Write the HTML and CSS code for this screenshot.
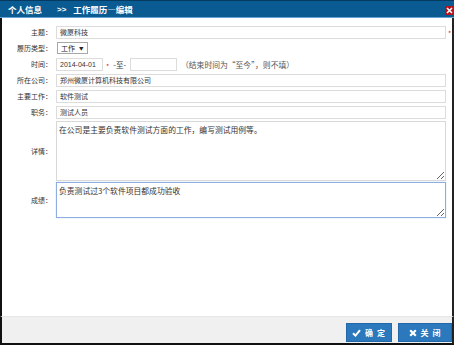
FILE: index.html
```html
<!DOCTYPE html>
<html lang="zh">
<head>
<meta charset="utf-8">
<link rel="stylesheet" href="styles.css">
</head>
<body>
<div class="window">
  <div class="header">
    <span class="crumb">个人信息</span>
    <span class="sep">&gt;&gt;</span>
    <span class="crumb">工作履历—编辑</span>
    <span class="close"><svg width="7" height="7" viewBox="0 0 7 7"><path d="M1 1L6 6M6 1L1 6" stroke="#fff" stroke-width="1.6"/></svg></span>
  </div>
  <div class="main">
    <div class="form">
      <div class="label">主题：</div>
      <div class="field"><input class="text full" value="微厦科技"><span class="req">*</span></div>

      <div class="label">履历类型：</div>
      <div class="field"><span class="select">工作 <span class="arrow">▼</span></span></div>

      <div class="label">时间：</div>
      <div class="field">
        <input class="text date" value="2014-04-01"><span class="req inline">*</span>
        <span class="to">-至-</span>
        <input class="text date" value="">
        <span class="hint">（结束时间为“至今”，则不填）</span>
      </div>

      <div class="label">所在公司：</div>
      <div class="field"><input class="text full" value="郑州微厦计算机科技有限公司"></div>

      <div class="label">主要工作：</div>
      <div class="field"><input class="text full" value="软件测试"></div>

      <div class="label">职务：</div>
      <div class="field"><input class="text full" value="测试人员"></div>

      <div class="label area-label">详情：</div>
      <div class="field area-field"><textarea class="area detail">在公司是主要负责软件测试方面的工作，编写测试用例等。</textarea></div>

      <div class="label area-label">成绩：</div>
      <div class="field area-field"><textarea class="area result focus">负责测试过3个软件项目都成功验收</textarea></div>
    </div>
  </div>
  <div class="footer">
    <span class="btn ok"><svg width="9" height="8" viewBox="0 0 9 8"><path d="M1 4.2L3.5 6.6L8 1.2" fill="none" stroke="#fff" stroke-width="2"/></svg>确 定</span>
    <span class="btn cancel"><svg width="8" height="8" viewBox="0 0 8 8"><path d="M1.2 1.2L6.8 6.8M6.8 1.2L1.2 6.8" stroke="#fff" stroke-width="2.2"/></svg>关 闭</span>
  </div>
</div>
</body>
</html>
```
FILE: styles.css
```css
* { box-sizing: border-box; }
html, body { margin: 0; padding: 0; background: #fff; }
body { font-family: "Noto Sans CJK SC", "Liberation Sans", sans-serif; color: #333; }

.window {
  width: 454px;
  height: 345px;
  display: flex;
  flex-direction: column;
}

.header {
  height: 18px;
  background: #0b5b93;
  border-top: 1px solid #063a60;
  border-bottom: 1px solid #6aa6d6;
  display: flex;
  align-items: center;
  padding-left: 8px;
  color: #fff;
  font-weight: bold;
  font-size: 8.5px;
  position: relative;
}
.header .sep { margin: 0 7px 0 15px; font-family: "Liberation Sans", sans-serif; font-size: 8px; }
.close {
  position: absolute;
  right: 1px;
  top: 5px;
  width: 8px;
  height: 9px;
  background: #b3141b;
  display: flex;
  align-items: center;
  justify-content: center;
}

.main {
  flex: 1;
  border-left: 2px solid #111;
  border-right: 2px solid #222;
  padding-top: 6px;
}

.form {
  display: grid;
  grid-template-columns: 50px 1fr;
  grid-template-rows: repeat(6, 16px) 61px 37px;
  column-gap: 4px;
}
.label {
  font-size: 7px;
  display: flex;
  align-items: center;
  justify-content: flex-end;
  color: #333;
}
.field {
  display: flex;
  align-items: center;
  font-size: 7px;
}
.area-field { align-items: flex-start; padding-top: 1px; }

.text {
  height: 13px;
  border: 1px solid #dcdcdc;
  background: #fff;
  font-family: "Noto Sans CJK SC", "Liberation Sans", sans-serif;
  font-size: 7px;
  color: #333;
  padding: 0 3px;
  outline: none;
}
.full { width: 390px; }
.date { width: 47px; font-family: "Liberation Sans", sans-serif; font-size: 7px; }
.req {
  color: #e02020;
  font-size: 7px;
  margin-left: 2px;
  align-self: flex-start;
  margin-top: 4px;
}
.req.inline { margin-left: 3px; margin-top: 5px; }
.to { margin: 0 4px 0 4px; font-size: 7.5px; }
.hint { margin-left: 4px; color: #555; font-size: 7.8px; }

.select {
  height: 12px;
  width: 31px;
  border: 1px solid #a8a8a8;
  display: flex;
  align-items: center;
  padding-left: 3px;
  font-size: 7px;
  color: #222;
  background: #fff;
  margin-left: 1px;
}
.select .arrow { font-size: 4.5px; margin-left: 4px; }

.area {
  width: 390px;
  border: 1px solid #d8d8d8;
  font-family: "Noto Sans CJK SC", "Liberation Sans", sans-serif;
  font-size: 7.8px;
  color: #333;
  padding: 2px 2px;
  outline: none;
  resize: both;
  margin: 0;
  display: block;
}
.detail { height: 60px; }
.result { height: 36px; }
.focus { border-color: #8eaee0; box-shadow: 0 0 1px #a9c4ee; }

.footer {
  height: 29px;
  background: #f0f0f0;
  border-top: 1px solid #e6e6e6;
  border-left: 2px solid #111;
  border-right: 2px solid #222;
  border-bottom: 2px solid #111;
  display: flex;
  justify-content: flex-end;
  align-items: flex-end;
  gap: 6px;
}
.btn {
  height: 19px;
  background: #2b78bc;
  border: 1px solid #2268a8;
  color: #fff;
  font-weight: bold;
  font-size: 8px;
  display: flex;
  align-items: center;
  justify-content: center;
  gap: 4px;
  margin-bottom: 1px;
  letter-spacing: 1px;
}
.ok { width: 46px; }
.cancel { width: 54px; }
```
